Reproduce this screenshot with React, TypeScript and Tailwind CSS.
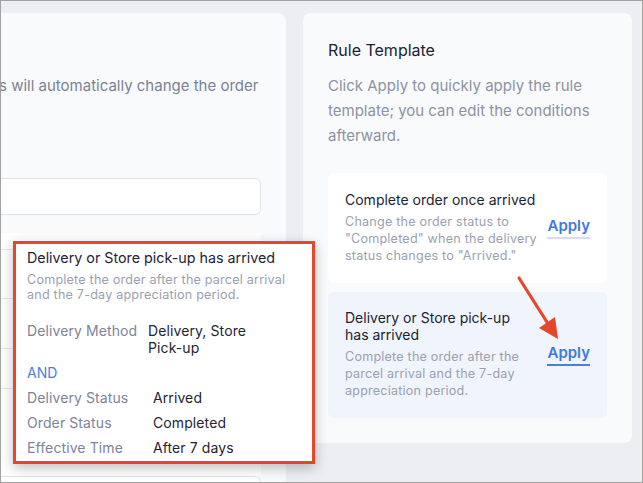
import React from 'react';

const font = { fontFamily: 'Inter, "Noto Sans", sans-serif' };

function Row({ label, value, labelWidth }: { label: string; value: string; labelWidth: string }) {
  return (
    <div className="flex text-[14px] leading-[17px] tracking-[0.1px]">
      <div className={`${labelWidth} shrink-0 text-[#7d8496]`}>{label}</div>
      <div className="w-[112px] text-[#1f2430]">{value}</div>
    </div>
  );
}

function RulePopup() {
  return (
    <div className="absolute left-[12px] top-[240px] w-[302px] h-[223px] border-[3px] border-[#e5472d] bg-white shadow-[0_4px_12px_rgba(0,0,0,0.25)] pl-[11px] pt-[5px]">
      <div className="text-[14.3px] leading-[18px] text-[#1f2430]">Delivery or Store pick-up has arrived</div>
      <div className="mt-[5px] text-[12.6px] leading-[15px] tracking-[0.2px] text-[#9ba1ae]">
        Complete the order after the parcel arrival
        <br />
        and the 7-day appreciation period.
      </div>
      <div className="mt-[20px] flex flex-col gap-[8px]">
        <Row label="Delivery Method" value="Delivery, Store Pick-up" labelWidth="w-[121px]" />
        <div className="text-[14px] leading-[17px] text-[#4a7fe0]">AND</div>
        <Row label="Delivery Status" value="Arrived" labelWidth="w-[126px]" />
        <Row label="Order Status" value="Completed" labelWidth="w-[126px]" />
        <Row label="Effective Time" value="After 7 days" labelWidth="w-[126px]" />
      </div>
    </div>
  );
}

function TemplateCard({ title, desc, active }: { title: React.ReactNode; desc: React.ReactNode; active?: boolean }) {
  return (
    <div
      className={`flex items-center rounded-md pl-[17px] pr-[17px] ${
        active ? 'bg-[#eff4fd] pt-[17px] pb-[18px]' : 'bg-white pt-[18px] pb-[19px]'
      }`}
    >
      <div className="w-[194px] shrink-0 self-start">
        <div className="text-[14px] leading-[17px] text-[#1c2330]">{title}</div>
        <div className="mt-[6px] text-[12.6px] leading-[16.8px] tracking-[0.2px] text-[#9ba1ae]">{desc}</div>
      </div>
      <div className="ml-auto">
        <span
          className={`block pb-[1px] text-[15px] font-semibold leading-[20px] text-[#3f78de] border-b-2 ${
            active ? 'border-[#4a7fe0]' : 'border-[#d3def5]'
          }`}
        >
          Apply
        </span>
      </div>
    </div>
  );
}

export default function App() {
  return (
    <div style={font} className="relative w-[643px] h-[483px] overflow-hidden border border-[#a2a2a2] bg-[#eceef1]">
      <div className="flex pt-[12px] gap-[17px]">
        {/* left card, cut off by the window */}
        <div className="w-[285px] h-[480px] rounded-tr-lg bg-[#f9fafb] pr-[25px] pt-[60px] overflow-hidden">
          <div className="-ml-[2px] whitespace-nowrap text-[15px] leading-[25px] text-[#7b8294]">
            s will automatically change the order
          </div>
          <div className="mt-[80px] h-[37px] rounded-r-md border border-l-0 border-[#dfe4ea] bg-white" />
          <div className="mt-[18px] bg-white">
            <div className="h-[17px] border-b border-[#e5e7eb]" />
            <div className="h-[49px] border-b border-[#e5e7eb]" />
            <div className="h-[50px] border-b border-[#e5e7eb]" />
            <div className="h-[40px] border-b border-[#e5e7eb]" />
            <div className="h-[87px]" />
          </div>
          <div className="h-[20px] rounded-r-md border border-l-0 border-[#dfe4ea] bg-white" />
        </div>

        {/* right card */}
        <div className="w-[329px] h-[430px] rounded-lg bg-[#f9fafb] px-[25px] pt-[25px]">
          <div className="text-[16px] leading-[24px] text-[#1c2330]">Rule Template</div>
          <div className="mt-[11px] text-[15px] leading-[25px] text-[#8c93a3]">
            Click Apply to quickly apply the rule template; you can edit the conditions afterward.
          </div>
          <div className="mt-[25px] flex flex-col gap-[9px]">
            <TemplateCard
              title="Complete order once arrived"
              desc={<>Change the order status to "Completed" when the delivery status changes to "Arrived."</>}
            />
            <TemplateCard
              active
              title={
                <>
                  Delivery or Store pick-up
                  <br />
                  has arrived
                </>
              }
              desc="Complete the order after the parcel arrival and the 7-day appreciation period."
            />
          </div>
        </div>
      </div>

      <RulePopup />

      <svg className="absolute left-[510px] top-[270px]" width="60" height="75" viewBox="0 0 60 75">
        <line x1="8" y1="7" x2="41" y2="59" stroke="#e5472d" strokeWidth="3.2" strokeLinecap="round" />
        <polygon points="47,68 28,57 44,46" fill="#e5472d" />
      </svg>
    </div>
  );
}
